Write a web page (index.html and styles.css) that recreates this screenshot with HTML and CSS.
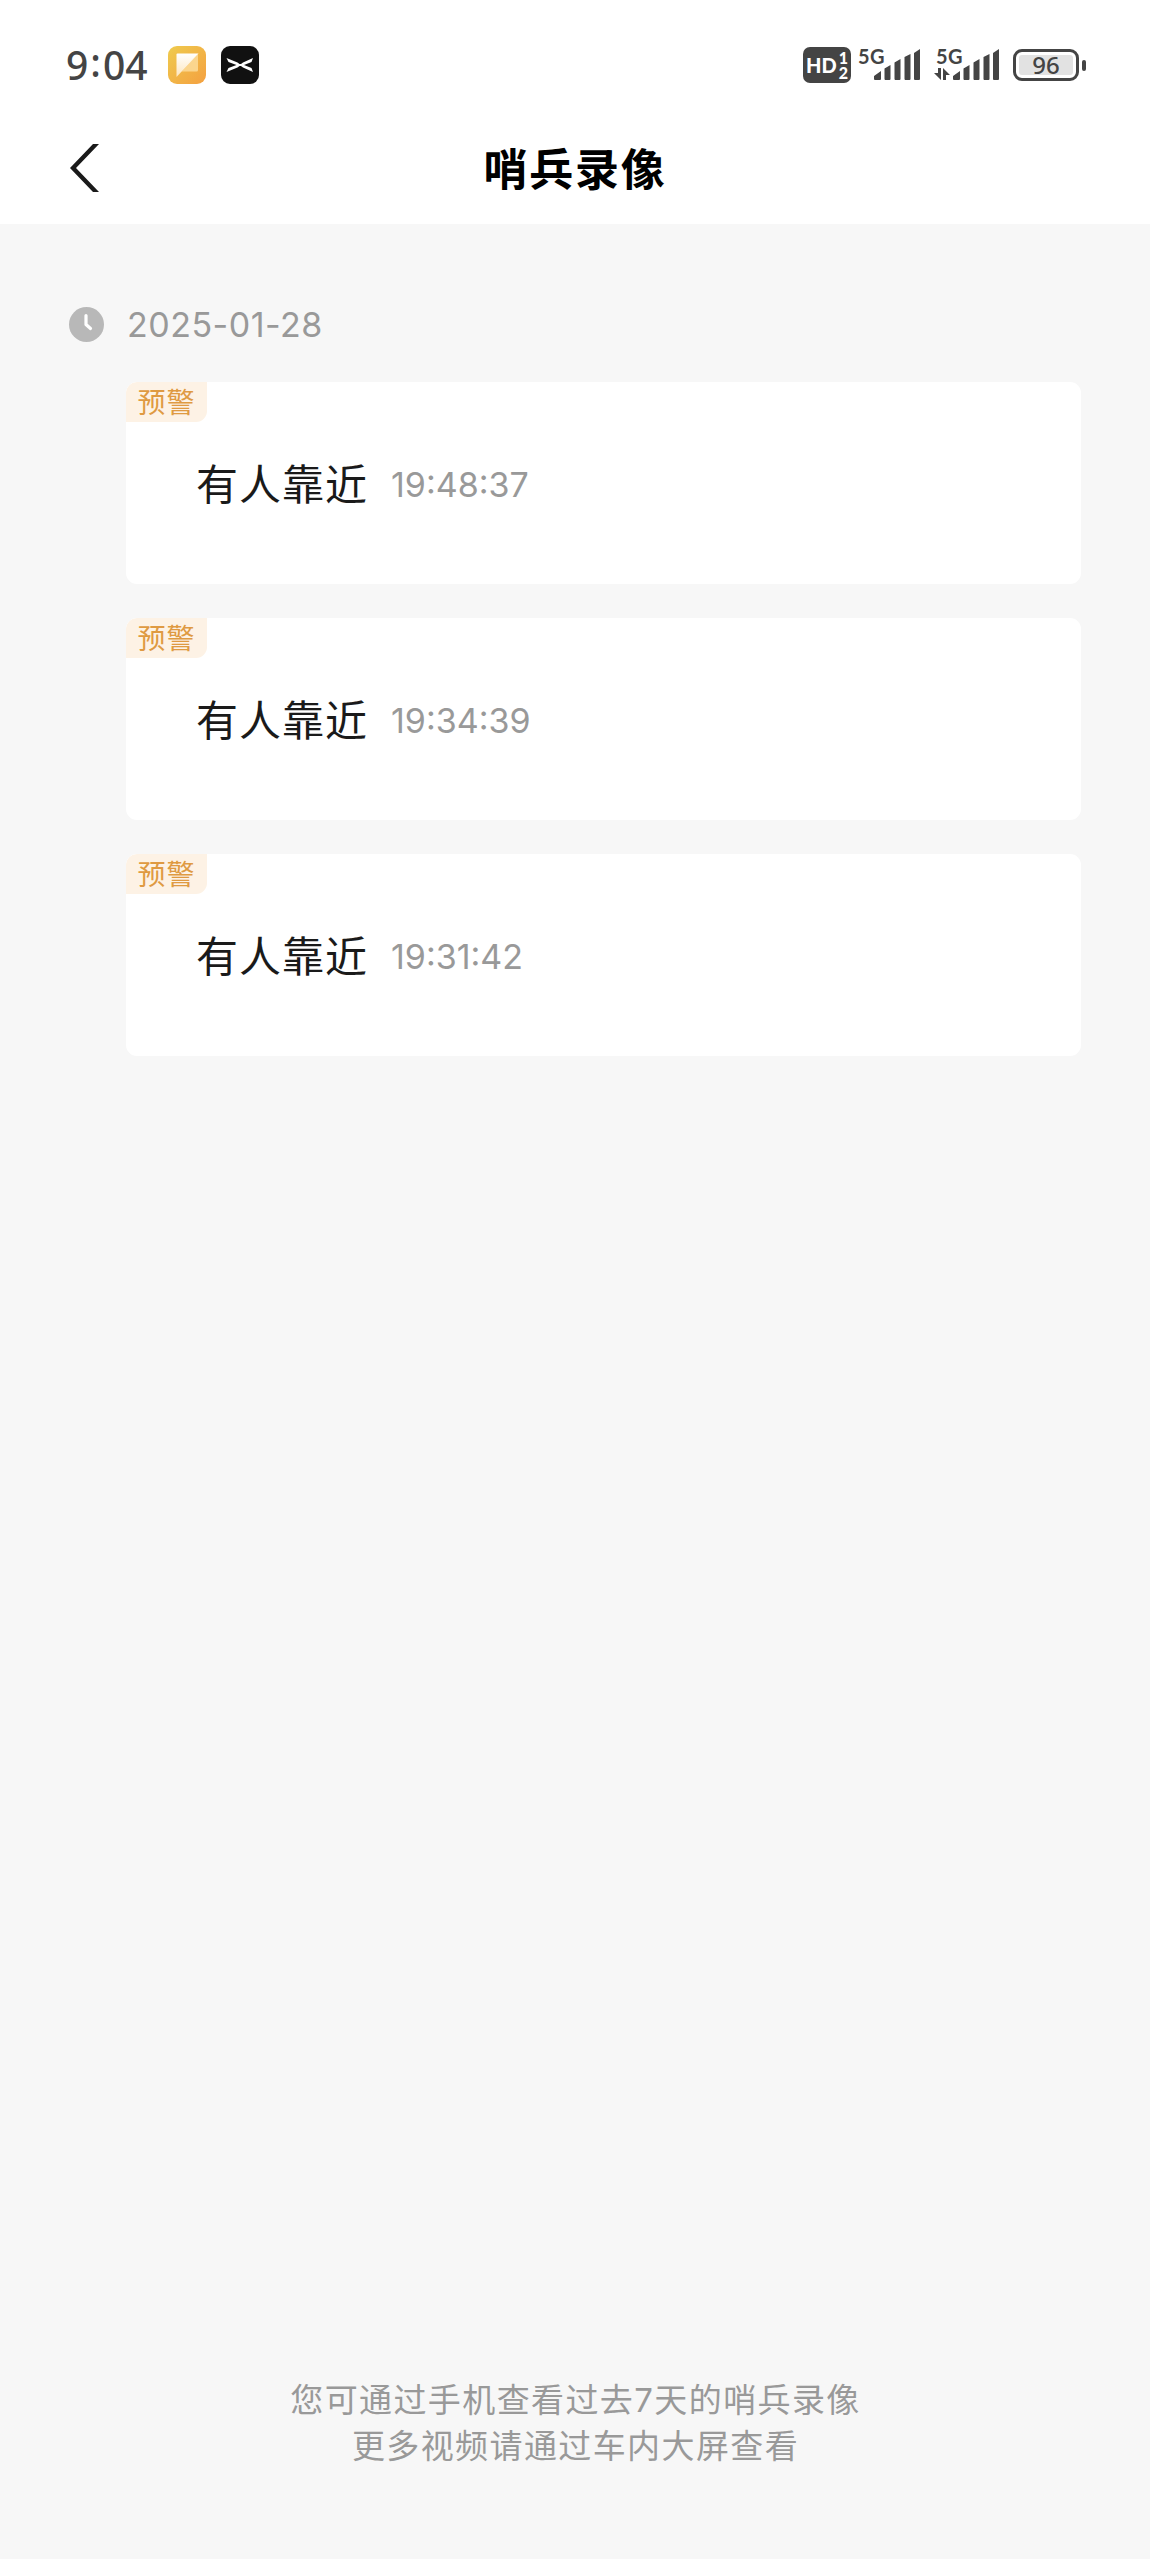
FILE: index.html
```html
<!DOCTYPE html>
<html lang="zh-CN">
<head>
    <meta charset="UTF-8">
    <meta name="viewport" content="width=device-width, initial-scale=1.0">
    <title>哨兵录像</title>
    <link rel="stylesheet" href="styles.css">
</head>
<body>
    <header class="header">
        <div class="status-bar">
            <div class="status-left">
                <span class="clock">9<span class="colon">:</span>04</span>
                <svg class="app-icon" viewBox="0 0 38 38">
                    <defs>
                        <linearGradient id="noteBg" x1="0" y1="0" x2="1" y2="1">
                            <stop offset="0" stop-color="#efcb4e"/>
                            <stop offset="1" stop-color="#f4a040"/>
                        </linearGradient>
                        <linearGradient id="notePage" x1="0" y1="0" x2="0" y2="1">
                            <stop offset="0" stop-color="#fff"/>
                            <stop offset="1" stop-color="#fde6bd"/>
                        </linearGradient>
                    </defs>
                    <rect width="38" height="38" rx="9" fill="url(#noteBg)"/>
                    <path d="M30 8v16a1.500 1.500 0 0 1-1.500 1.500H13.500z" fill="#fbd58d"/>
                    <path d="M9.500 7.500H30.500L8.500 31V8.500a1 1 0 0 1 1-1z" fill="url(#notePage)"/>
                </svg>
                <svg class="app-icon app-icon-car" viewBox="0 0 38 38">
                    <rect width="38" height="38" rx="9" fill="#111"/>
                    <path d="M5.500 12L16.500 16.500 18.500 18H20L22 16.500 32 12 30.500 16 23 19 30.500 22 32 26 22 21.500 20 20H18.500L16.500 21.500 5.500 26 7.500 22 15.500 19 7.500 16z" fill="#fff"/>
                </svg>
            </div>
            <div class="status-right">
                <div class="hd">
                    <span>HD</span>
                    <span class="hd-sims"><span>1</span><span>2</span></span>
                </div>
                <div class="signal">
                    <span class="network">5G</span>
                    <svg class="bars" viewBox="0 0 46 31" fill="#444">
                        <path d="M0 30v-3l7-5v8q0 1-1 1H1q-1 0-1-1zM10.500 30V19.500l6-3.500v14q0 1-1 1h-4q-1 0-1-1zM20.500 30V13.500l6-3.500v20q0 1-1 1h-4q-1 0-1-1zM30.500 30V8l6-3v25q0 1-1 1h-4q-1 0-1-1zM40 30V4l6-4v30q0 1-1 1h-4q-1 0-1-1z"/>
                    </svg>
                </div>
                <div class="signal signal-data">
                    <span class="network">5G</span>
                    <svg class="arrows" viewBox="0 0 16 12" fill="#444">
                        <path d="M4 0h3v12L0 5h4zM9 0l7 7h-4v5H9z"/>
                    </svg>
                    <svg class="bars" viewBox="0 0 46 31" fill="#444">
                        <path d="M0 30v-3l7-5v8q0 1-1 1H1q-1 0-1-1zM10.500 30V19.500l6-3.500v14q0 1-1 1h-4q-1 0-1-1zM20.500 30V13.500l6-3.500v20q0 1-1 1h-4q-1 0-1-1zM30.500 30V8l6-3v25q0 1-1 1h-4q-1 0-1-1zM40 30V4l6-4v30q0 1-1 1h-4q-1 0-1-1z"/>
                    </svg>
                </div>
                <div class="battery"><span class="battery-level">96</span></div>
                <span class="battery-tip"></span>
            </div>
        </div>
        <div class="nav-bar">
            <svg class="back" viewBox="0 0 30 48">
                <path d="M23 0H29L6 24 29 48H23L0 24z" fill="#1a1a1a"/>
            </svg>
            <h1>哨兵录像</h1>
        </div>
    </header>

    <main class="content">
        <div class="date-row">
            <svg class="date-icon" viewBox="0 0 35 35">
                <circle cx="17.500" cy="17.500" r="17.500" fill="#b8b8b8"/>
                <path d="M17 8.500V17.500L21.500 21.500" fill="none" stroke="#fff" stroke-width="3.200" stroke-linecap="round" stroke-linejoin="round"/>
            </svg>
            <span class="date">2025-01-28</span>
        </div>

        <div class="list">
            <div class="card">
                <span class="tag">预警</span>
                <div class="event">
                    <span class="event-name">有人靠近</span>
                    <span class="event-time">19:48:37</span>
                </div>
            </div>
            <div class="card">
                <span class="tag">预警</span>
                <div class="event">
                    <span class="event-name">有人靠近</span>
                    <span class="event-time">19:34:39</span>
                </div>
            </div>
            <div class="card">
                <span class="tag">预警</span>
                <div class="event">
                    <span class="event-name">有人靠近</span>
                    <span class="event-time">19:31:42</span>
                </div>
            </div>
        </div>
    </main>

    <footer class="footer">
        <p>您可通过手机查看过去7天的哨兵录像</p>
        <p>更多视频请通过车内大屏查看</p>
    </footer>
</body>
</html>
```
FILE: styles.css
```css
* {
    box-sizing: border-box;
}
body {
    font-family: Inter, 'Noto Sans CJK SC', sans-serif;
    background-color: #f7f7f7;
    color: #1a1a1a;
    margin: 0;
    min-height: 100vh;
    display: flex;
    flex-direction: column;
}
svg {
    display: block;
    flex-shrink: 0;
}
.header {
    background-color: #ffffff;
    height: 224px;
}
.status-bar {
    height: 112px;
    padding: 18px 64px 0 66px;
    display: flex;
    justify-content: space-between;
}
.status-left {
    display: flex;
    align-items: center;
    height: 94px;
}
.clock {
    width: 102px;
    font-family: 'Noto Sans', sans-serif;
    font-size: 39px;
    font-weight: 500;
    line-height: 50px;
    color: #444444;
}
.colon {
    margin: 0 2px;
    vertical-align: 3px;
    line-height: 1;
}
.app-icon {
    width: 38px;
    height: 38px;
}
.app-icon-car {
    margin-left: 15px;
}
.status-right {
    display: flex;
    align-items: center;
    height: 94px;
    color: #444444;
}
.hd {
    display: flex;
    align-items: center;
    justify-content: center;
    gap: 2px;
    width: 48px;
    height: 36px;
    border-radius: 7px;
    background-color: #444444;
    color: #ffffff;
    font-family: Lato, sans-serif;
    font-size: 20px;
    font-weight: 900;
    line-height: 36px;
}
.hd-sims {
    display: flex;
    flex-direction: column;
    font-size: 16px;
    line-height: 15px;
}
.signal {
    display: flex;
    align-items: flex-end;
    position: relative;
    width: 62px;
    height: 34px;
    margin-left: 7px;
    padding-bottom: 2px;
    justify-content: flex-end;
}
.signal-data {
    width: 66px;
    margin-left: 13px;
}
.network {
    position: absolute;
    left: 0;
    top: -1px;
    font-family: Lato, sans-serif;
    font-size: 20px;
    font-weight: 700;
    line-height: 18px;
    letter-spacing: 0.5px;
}
.signal-data .network {
    left: 3px;
}
.bars {
    width: 46px;
    height: 31px;
}
.arrows {
    width: 16px;
    height: 12px;
    margin-right: 3px;
}
.battery {
    width: 66px;
    height: 32px;
    margin-left: 14px;
    padding: 3px;
    border: 3px solid #444444;
    border-radius: 9px;
}
.battery-level {
    display: block;
    height: 20px;
    border-radius: 3px;
    background-color: #e2e2e2;
    font-family: 'Noto Sans', sans-serif;
    font-size: 24px;
    font-weight: 500;
    line-height: 20px;
    text-align: center;
}
.battery-tip {
    width: 4px;
    height: 11px;
    margin-left: 3px;
    border-radius: 2px;
    background-color: #444444;
}
.nav-bar {
    display: grid;
    grid-template-columns: 100px 1fr 100px;
    align-items: center;
    height: 112px;
}
.back {
    width: 30px;
    height: 48px;
    margin-left: 70px;
}
h1 {
    margin: 0;
    padding-top: 4px;
    color: #000000;
    font-size: 44px;
    font-weight: 700;
    line-height: 64px;
    letter-spacing: 1.7px;
    text-align: center;
}
.content {
    flex: 1;
    padding: 76px 69px 0;
}
.date-row {
    display: flex;
    align-items: center;
    height: 48px;
    gap: 23px;
}
.date-icon {
    width: 35px;
    height: 35px;
}
.date {
    padding-top: 2px;
    font-size: 34px;
    line-height: 48px;
    letter-spacing: 0.5px;
    color: #999999;
}
.list {
    display: flex;
    flex-direction: column;
    gap: 34px;
    margin: 34px 0 0 57px;
}
.card {
    height: 202px;
    border-radius: 11px;
    background-color: #ffffff;
    overflow: hidden;
}
.tag {
    display: block;
    width: 81px;
    height: 40px;
    border-radius: 11px 0 11px 0;
    background-color: #fdf2e5;
    color: #df9a42;
    font-size: 28px;
    line-height: 43px;
    letter-spacing: 1px;
    text-align: center;
}
.event {
    display: flex;
    align-items: center;
    gap: 23px;
    height: 64px;
    margin-top: 31px;
    padding-left: 70px;
}
.event-name {
    font-size: 42px;
    line-height: 64px;
    letter-spacing: 1px;
}
.event-time {
    font-size: 34px;
    line-height: 64px;
    color: #999999;
}
.footer {
    padding: 0 0 90px 1px;
    color: #999999;
    font-size: 33px;
    line-height: 46px;
    letter-spacing: 1.4px;
    text-align: center;
}
.footer p {
    margin: 0;
}
```
